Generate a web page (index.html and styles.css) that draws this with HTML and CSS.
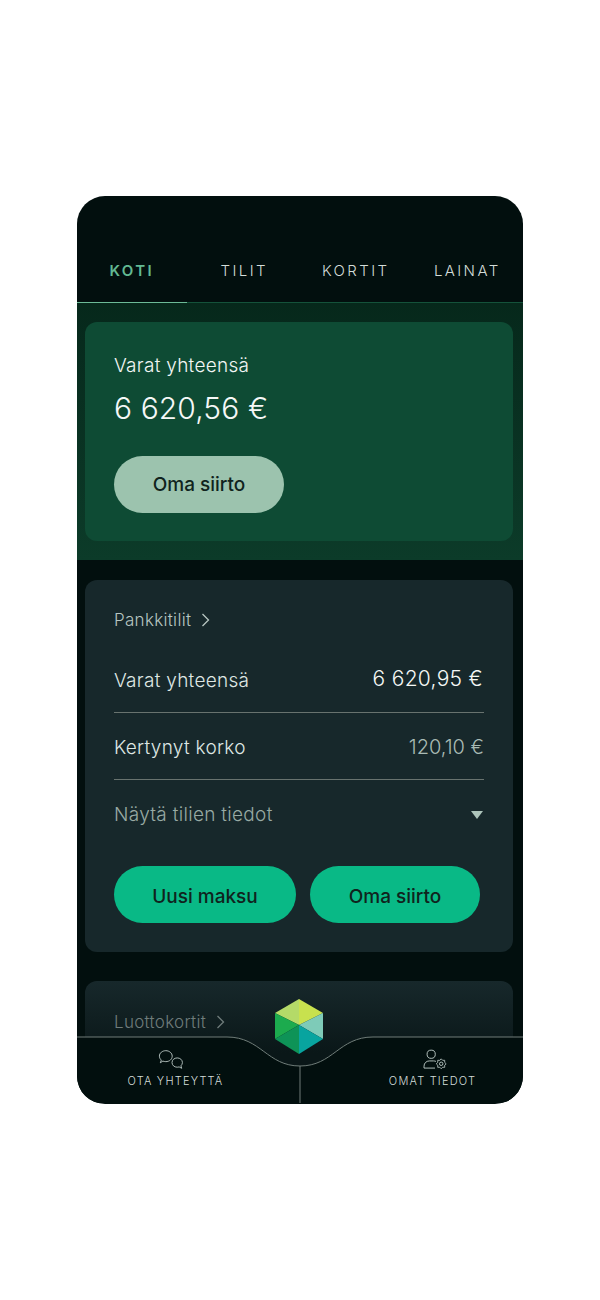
FILE: index.html
```html
<!DOCTYPE html>
<html lang="fi">
<head>
<meta charset="utf-8">
<title>Koti</title>
<link rel="stylesheet" href="styles.css">
</head>
<body>
<main class="phone">
  <nav class="tabs">
    <a class="tab active">KOTI</a>
    <a class="tab">TILIT</a>
    <a class="tab">KORTIT</a>
    <a class="tab">LAINAT</a>
  </nav>
  <section class="hero">
    <div class="hero-card">
      <div class="hero-label">Varat yhteensä</div>
      <div class="hero-amount">6 620,56 €</div>
      <button class="btn btn-pale">Oma siirto</button>
    </div>
  </section>
  <section class="card accounts">
    <div class="card-title">Pankkitilit
      <svg class="chev" width="9" height="14" viewBox="0 0 9 14"><path d="M1.500 1 7.500 7l-6 6" fill="none" stroke="currentColor" stroke-width="1.300"/></svg>
    </div>
    <div class="row row-main"><span>Varat yhteensä</span><span class="val">6 620,95 €</span></div>
    <div class="row row-sec"><span>Kertynyt korko</span><span class="val-sec">120,10 €</span></div>
    <div class="row-details"><span>Näytä tilien tiedot</span><i class="caret"></i></div>
    <div class="actions">
      <button class="btn btn-green btn-a">Uusi maksu</button>
      <button class="btn btn-green btn-b">Oma siirto</button>
    </div>
  </section>
  <section class="card credit">
    <div class="card-title dim">Luottokortit
      <svg class="chev" width="9" height="14" viewBox="0 0 9 14"><path d="M1.500 1 7.500 7l-6 6" fill="none" stroke="currentColor" stroke-width="1.300"/></svg>
    </div>
  </section>
  <footer class="bottom">
    <svg class="curve" width="446" height="69" viewBox="0 0 446 69">
      <path d="M0 2H150C184 2 190 31 223 31C256 31 262 2 296 2H446V68H0Z" fill="#020f0e"/>
      <path d="M0 2H150C184 2 190 31 223 31C256 31 262 2 296 2H446" fill="none" stroke="#707d79" stroke-width="1"/>
      <path d="M223 31V68" stroke="#707d79" stroke-width="1"/>
    </svg>
    <svg class="cube" width="48" height="55" viewBox="0 0 48 55">
      <path d="M24 0 0 14 24 26Z" fill="#b4da68"/>
      <path d="M24 0 48 14 24 26Z" fill="#c8e14e"/>
      <path d="M0 14V40L24 26Z" fill="#1cab4e"/>
      <path d="M0 40 24 55V26Z" fill="#0e9357"/>
      <path d="M48 14V40L24 26Z" fill="#7ecbb8"/>
      <path d="M48 40 24 55V26Z" fill="#08a49f"/>
    </svg>
    <div class="nav-item nav-left">
      <svg class="nav-icon" width="26" height="21" viewBox="0 0 28 22" fill="none" stroke="#b9c6c2" stroke-width="1">
        <path d="M2.500 14.500 3.600 11.600C2.300 10.500 1.500 9 1.500 7.400 1.500 4 4.700 1.500 8.400 1.500S15.300 4 15.300 7.400 12.200 13.300 8.400 13.300C7.300 13.300 6.200 13.100 5.300 12.700Z"/>
        <path d="M25.500 20.500 24.700 17.800C25.700 16.800 26.300 15.600 26.300 14.300 26.300 11.400 23.800 9.300 20.700 9.300S15.100 11.400 15.100 14.300 17.600 19.300 20.700 19.300C21.400 19.300 22.100 19.200 22.800 19Z"/>
      </svg>
      <span>OTA YHTEYTTÄ</span>
    </div>
    <div class="nav-item nav-right">
      <svg class="nav-icon" width="26" height="21" viewBox="0 0 26 22" fill="none" stroke="#b9c6c2" stroke-width="1">
        <circle cx="9" cy="5.500" r="4.300"/>
        <path d="M1.500 20V18C1.500 14.800 4 12.500 7 12.500H11.500C12.500 12.500 13.300 12.700 14 13M1.500 20H13"/>
        <circle cx="19.500" cy="15.500" r="1.800"/>
        <polygon transform="translate(19.500 15.500)" stroke-linejoin="round" stroke-width=".9" points="5.200,0 3.600,1.490 3.680,3.680 1.490,3.600 0,5.200 -1.490,3.600 -3.680,3.680 -3.600,1.490 -5.200,0 -3.600,-1.490 -3.680,-3.680 -1.490,-3.600 0,-5.200 1.490,-3.600 3.680,-3.680 3.600,-1.490"/>
      </svg>
      <span>OMAT TIEDOT</span>
    </div>
  </footer>
</main>
</body>
</html>
```

FILE: styles.css
```css
* { box-sizing: border-box; }
html, body { margin: 0; background: #fff; }
body {
  padding-top: 196px;
  height: 1300px;
  font-family: Inter, "Liberation Sans", sans-serif;
  overflow: hidden;
}
.phone {
  position: relative;
  width: 446px;
  height: 908px;
  margin-left: 77px;
  background: #020f0e;
  border-radius: 28px;
  overflow: hidden;
  color: #fff;
}
.tabs {
  display: grid;
  grid-template-columns: repeat(4, 1fr);
  height: 107px;
  padding-top: 66px;
  border-bottom: 1px solid #14523a;
}
.tab {
  text-align: center;
  font-size: 15px;
  line-height: 18px;
  letter-spacing: 2.400px;
  font-weight: 300;
  color: #d3ddd9;
}
.tab.active {
  color: #62b993;
  font-weight: 600;
  margin-right: 2px;
  margin-bottom: -1px;
  border-bottom: 1.500px solid #6cbb97;
}
.hero {
  height: 257px;
  background: linear-gradient(#06281b, #0c3b29);
  padding: 19px 10px 19px 8px;
}
.hero-card {
  height: 219px;
  border-radius: 12px;
  background: #0e4b34;
  padding: 32px 29px;
}
.hero-label { font-size: 19px; line-height: 24px; font-weight: 350; letter-spacing: .28px; color: #f2f6f4; }
.hero-amount { font-size: 30px; line-height: 36px; font-weight: 300; margin-top: 12px; letter-spacing: .1px; color: #f5f8f7; }
.btn {
  display: block;
  height: 57px;
  border: 0;
  border-radius: 29px;
  font: 450 19px/57px Inter, sans-serif;
  color: #10231d;
  padding: 0;
}
.btn-pale { width: 170px; margin-top: 30px; background: #9cc3ae; }
.btn-green { background: #09b986; padding-top: 2px; }
.btn-a { width: 182px; }
.btn-b { width: 170px; }
.card {
  margin: 20px 10px 0 8px;
  border-radius: 12px;
  background: #17282b;
  padding: 0 29px;
}
.accounts { height: 372px; padding-top: 29px; }
.credit {
  margin-top: 29px;
  height: 120px;
  padding-top: 29px;
  background: linear-gradient(#17282b, #0a1718 60%);
}
.card-title {
  display: flex;
  align-items: center;
  gap: 10px;
  font-size: 17px;
  line-height: 22px;
  font-weight: 350;
  letter-spacing: .3px;
  color: #b8c6c2;
}
.card-title.dim { color: #6f7c7b; padding-top: 1px; }
.row {
  display: flex;
  justify-content: space-between;
  align-items: center;
  height: 67px;
  padding-top: 2px;
  border-bottom: 1px solid #68736f;
  font-size: 19px;
  font-weight: 350;
  letter-spacing: .28px;
  color: #dfe7e4;
}
.row-main { margin-top: 14px; height: 68px; padding-top: 4px; }
.val { font-size: 21px; font-weight: 300; letter-spacing: .3px; color: #f5f8f6; margin-right: 1px; margin-top: -4px; }
.val-sec { font-size: 20px; font-weight: 300; letter-spacing: 0; color: #a9bbb4; }
.row-details {
  display: flex;
  justify-content: space-between;
  align-items: center;
  height: 67px;
  padding-top: 2px;
  font-size: 19px;
  font-weight: 350;
  letter-spacing: .3px;
  color: #98aaa4;
}
.caret {
  width: 0;
  height: 0;
  margin-right: 1px;
  border-left: 6.500px solid transparent;
  border-right: 6.500px solid transparent;
  border-top: 8px solid #adc4bb;
}
.actions { display: flex; gap: 14px; margin-top: 19px; }
.bottom {
  position: absolute;
  left: 0;
  bottom: 0;
  width: 446px;
  height: 69px;
  display: grid;
  grid-template-columns: 1fr 1fr;
}
.curve { position: absolute; left: 0; top: 0; }
.cube { position: absolute; left: 198px; top: -36px; }
.nav-item {
  position: relative;
  display: flex;
  flex-direction: column;
  align-items: center;
  font-size: 11px;
  line-height: 14px;
  letter-spacing: 1.200px;
  font-weight: 300;
  color: #d3ddd9;
  padding-top: 14px;
  gap: 4px;
}
.nav-left { padding-right: 26px; }
.nav-left .nav-icon { margin-left: -9px; }
.nav-right { padding-left: 42px; }
.nav-right .nav-icon { margin-left: 4px; }
```
